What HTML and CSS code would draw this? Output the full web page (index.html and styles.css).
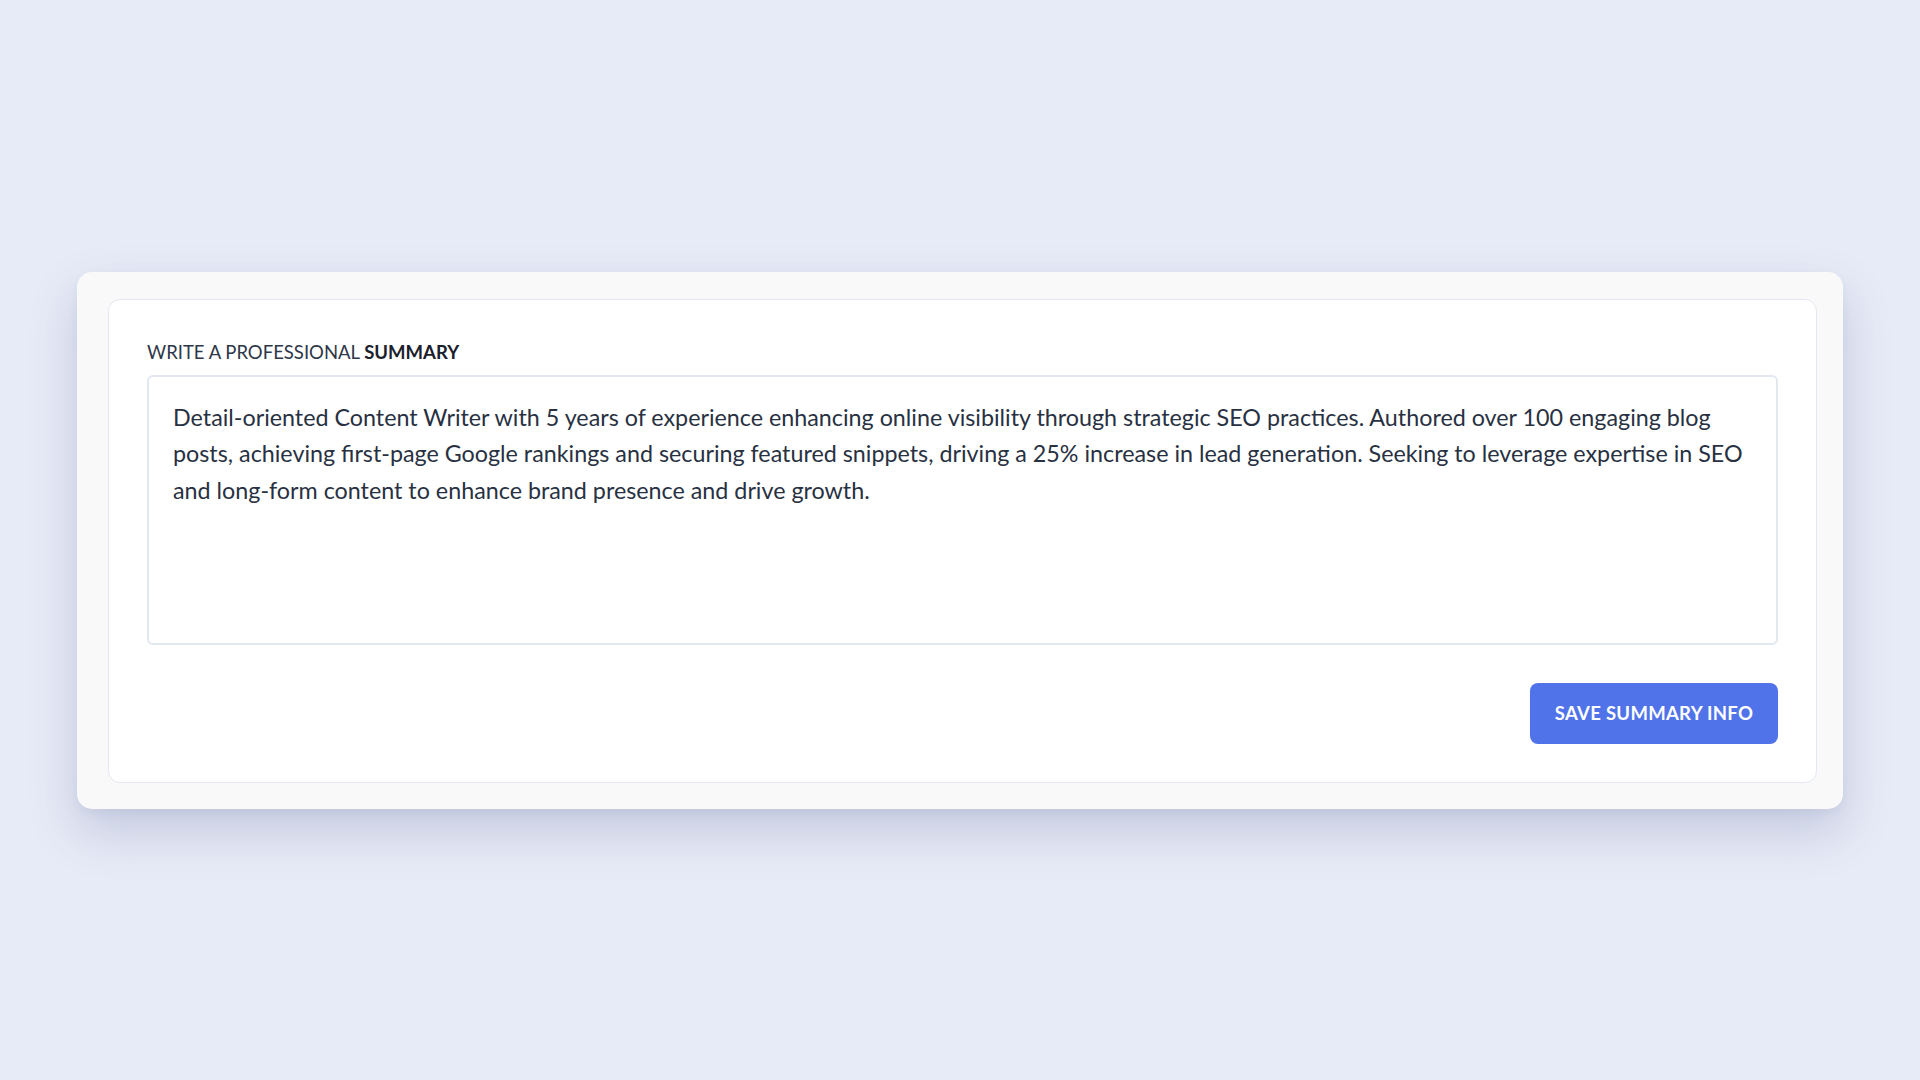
FILE: index.html
```html
<!DOCTYPE html>
<html lang="en">
<head>
<meta charset="utf-8">
<title>Professional Summary</title>
<link rel="stylesheet" href="styles.css">
</head>
<body>
<main class="page">
  <section class="outer-card">
    <div class="inner-card">
      <label class="field-label" for="summary">WRITE A PROFESSIONAL <strong>SUMMARY</strong></label>
      <textarea id="summary" class="summary-input">Detail-oriented Content Writer with 5 years of experience enhancing online visibility through strategic SEO practices. Authored over 100 engaging blog
posts, achieving first-page Google rankings and securing featured snippets, driving a 25% increase in lead generation. Seeking to leverage expertise in SEO
and long-form content to enhance brand presence and drive growth.</textarea>
      <div class="actions">
        <button class="save-btn" type="button">SAVE SUMMARY INFO</button>
      </div>
    </div>
  </section>
</main>
</body>
</html>
```
FILE: styles.css
```css
* { box-sizing: border-box; }
html, body { margin: 0; padding: 0; }
body {
  background: #e7ebf7;
  font-family: "Lato", "Open Sans", sans-serif;
  color: #2d3748;
}
.page {
  min-height: 1080px;
  display: flex;
  align-items: center;
  justify-content: center;
  padding: 0 77px;
}
.outer-card {
  width: 100%;
  background: #f9f9f9;
  border-radius: 15px;
  padding: 27px 26px 26px 31px;
  box-shadow: 0 22px 48px rgba(70, 80, 130, 0.22), 0 4px 10px rgba(70, 80, 130, 0.06);
}
.inner-card {
  background: #ffffff;
  border: 1px solid #e3e8f1;
  border-radius: 12px;
  padding: 38px;
  display: flex;
  flex-direction: column;
}
.field-label {
  font-size: 18.5px;
  line-height: 28px;
  color: #2d3748;
  margin-bottom: 9px;
}
.field-label strong {
  font-weight: 700;
  color: #1a202c;
}
.summary-input {
  display: block;
  width: 100%;
  height: 270px;
  border: 2px solid #e2e7f0;
  border-radius: 6px;
  padding: 22px 4px 22px 24px;
  font-family: "Lato", "Open Sans", sans-serif;
  font-size: 23.3px;
  line-height: 36.7px;
  color: #283142;
  resize: none;
  outline: none;
  background: #fff;
  overflow: hidden;
}
.actions {
  display: flex;
  justify-content: flex-end;
  margin-top: 38px;
}
.save-btn {
  width: 248px;
  height: 61px;
  border: none;
  border-radius: 8px;
  background: #5073ea;
  color: #ffffff;
  font-family: "Lato", "Open Sans", sans-serif;
  font-weight: 700;
  font-size: 18.5px;
  letter-spacing: 0.3px;
  cursor: pointer;
}
```
